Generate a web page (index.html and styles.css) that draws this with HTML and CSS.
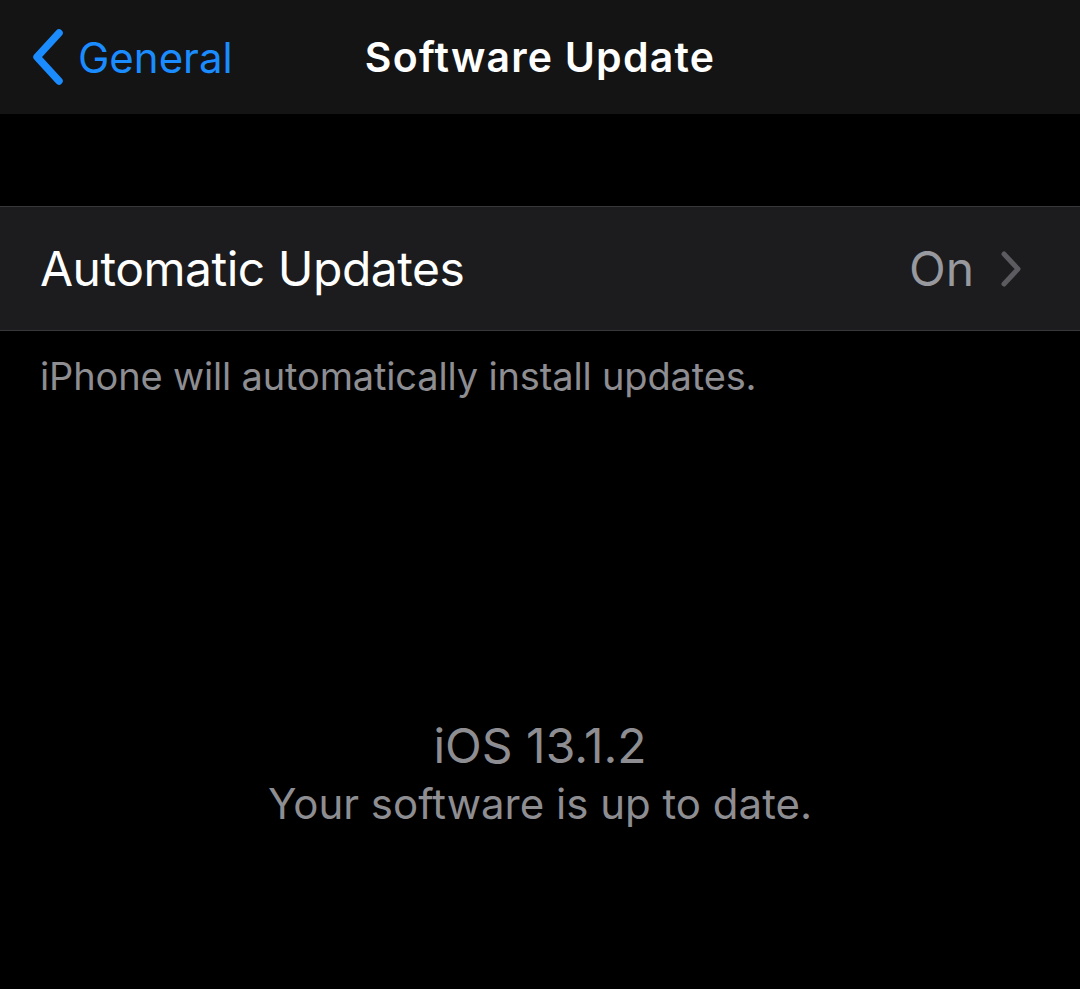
FILE: index.html
```html
<!DOCTYPE html>
<html lang="en">
<head>
  <meta charset="UTF-8">
  <meta name="viewport" content="width=device-width, initial-scale=1.0">
  <title>Software Update</title>
  <link rel="stylesheet" href="styles.css">
</head>
<body>
  <div class="navBar">
    <a class="backLink" href="#">
      <svg class="backChevron" width="36" height="58" viewBox="0 0 36 58">
        <path d="M29 5 L7 29 L29 53" fill="none" stroke="#1a8cff" stroke-width="7.5" stroke-linecap="round" stroke-linejoin="round"/>
      </svg>
      <span>General</span>
    </a>
    <h1 class="navTitle">Software Update</h1>
  </div>

  <div class="group">
    <div class="row">
      <span class="rowLabel">Automatic Updates</span>
      <span class="rowValue">On</span>
      <svg class="rowChevron" width="22" height="38" viewBox="0 0 22 38">
        <path d="M4 4 L18 19 L4 34" fill="none" stroke="#5b5b60" stroke-width="5" stroke-linecap="round" stroke-linejoin="round"/>
      </svg>
    </div>
  </div>
  <p class="footnote">iPhone will automatically install updates.</p>

  <div class="status">
    <div class="version">iOS 13.1.2</div>
    <div class="statusText">Your software is up to date.</div>
  </div>
</body>
</html>
```

FILE: styles.css
```css
* {
  margin: 0;
  padding: 0;
  box-sizing: border-box;
  font-family: Inter, "Noto Sans", sans-serif;
}
body {
  background: #000;
  color: #fff;
  width: 1080px;
  height: 989px;
  overflow: hidden;
}
.navBar {
  position: relative;
  height: 114px;
  background: #141414;
  display: flex;
  align-items: center;
  justify-content: center;
}
.backLink {
  position: absolute;
  left: 30px;
  top: 28px;
  display: flex;
  align-items: center;
  gap: 12px;
  color: #1a8cff;
  text-decoration: none;
  font-size: 42px;
}
.navTitle {
  font-size: 41px;
  font-weight: 600;
  letter-spacing: 1.2px;
  margin-top: -1px;
}
.group {
  margin-top: 92px;
  background: #1c1c1e;
  border-top: 1px solid #38383a;
  border-bottom: 1px solid #38383a;
}
.row {
  height: 123px;
  display: flex;
  align-items: center;
  padding: 0 58px 0 40px;
}
.rowLabel {
  flex: 1;
  font-size: 48px;
  letter-spacing: -0.5px;
}
.rowValue {
  font-size: 48px;
  color: #98989f;
  margin-right: 26px;
}
.footnote {
  padding: 22px 40px 0;
  font-size: 38px;
  color: #8d8d92;
  letter-spacing: -0.15px;
}
.status {
  margin-top: 318px;
  text-align: center;
  color: #8d8d92;
}
.version {
  font-size: 48px;
  line-height: 58px;
}
.statusText {
  font-size: 42px;
  line-height: 58px;
}
```
